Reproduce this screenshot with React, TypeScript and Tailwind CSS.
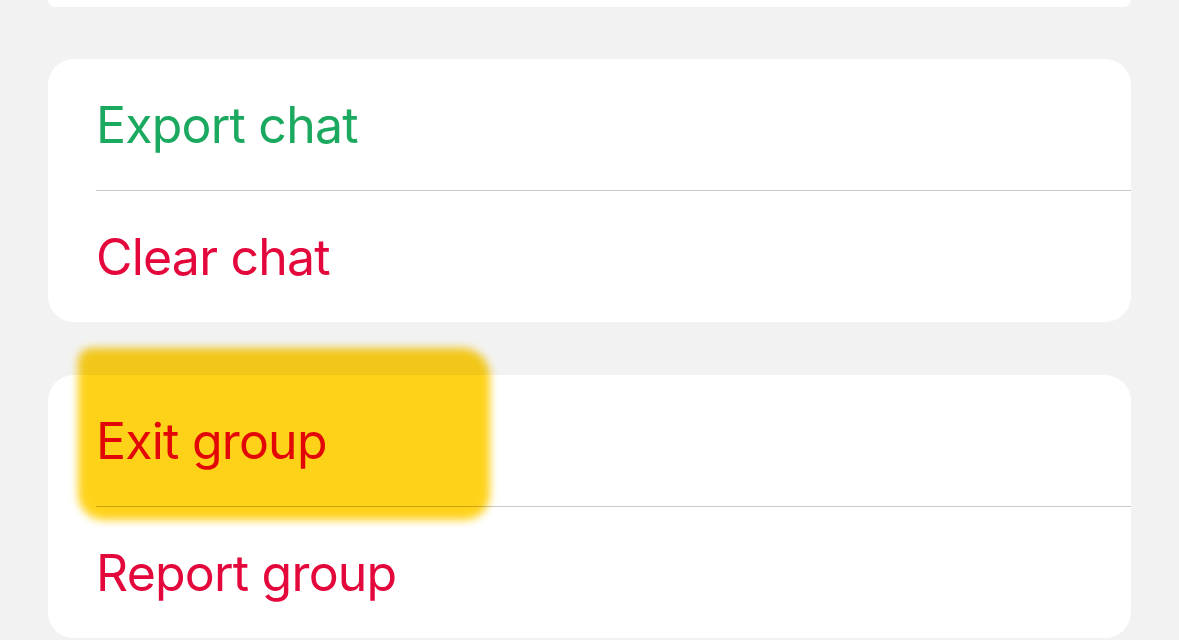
const rows1 = [
  { label: 'Export chat', color: 'text-[#1ba95f]' },
  { label: 'Clear chat', color: 'text-[#e3073b]' },
];

const rows2 = [
  { label: 'Exit group', color: 'text-[#e3073b]' },
  { label: 'Report group', color: 'text-[#e3073b]' },
];

function Card({ rows }: { rows: { label: string; color: string }[] }) {
  return (
    <div className="bg-white rounded-[26px] overflow-hidden">
      {rows.map((row, i) => (
        <div key={row.label}>
          {i > 0 && <div className="ml-[48px] h-px bg-[#c8c8cc]" />}
          <div className="h-[131px] flex items-center pl-[48px]">
            <span className={`text-[50px] leading-none tracking-[-0.8px] ${row.color}`}>
              {row.label}
            </span>
          </div>
        </div>
      ))}
    </div>
  );
}

export default function App() {
  return (
    <div
      className="relative w-[1179px] h-[640px] overflow-hidden bg-[#f2f2f2] px-[48px]"
      style={{ fontFamily: 'Inter, "Noto Sans", sans-serif' }}
    >
      <div className="h-[7px] bg-white rounded-b-[26px]" />
      <div className="mt-[52px]">
        <Card rows={rows1} />
      </div>
      <div className="mt-[53px]">
        <Card rows={rows2} />
      </div>

      {/* highlighter marker */}
      <div className="absolute left-[78px] top-[348px] w-[412px] h-[172px] rounded-tl-[14px] rounded-tr-[28px] rounded-b-[26px] bg-[#ffd21a] mix-blend-multiply blur-[4px]" />
    </div>
  );
}
